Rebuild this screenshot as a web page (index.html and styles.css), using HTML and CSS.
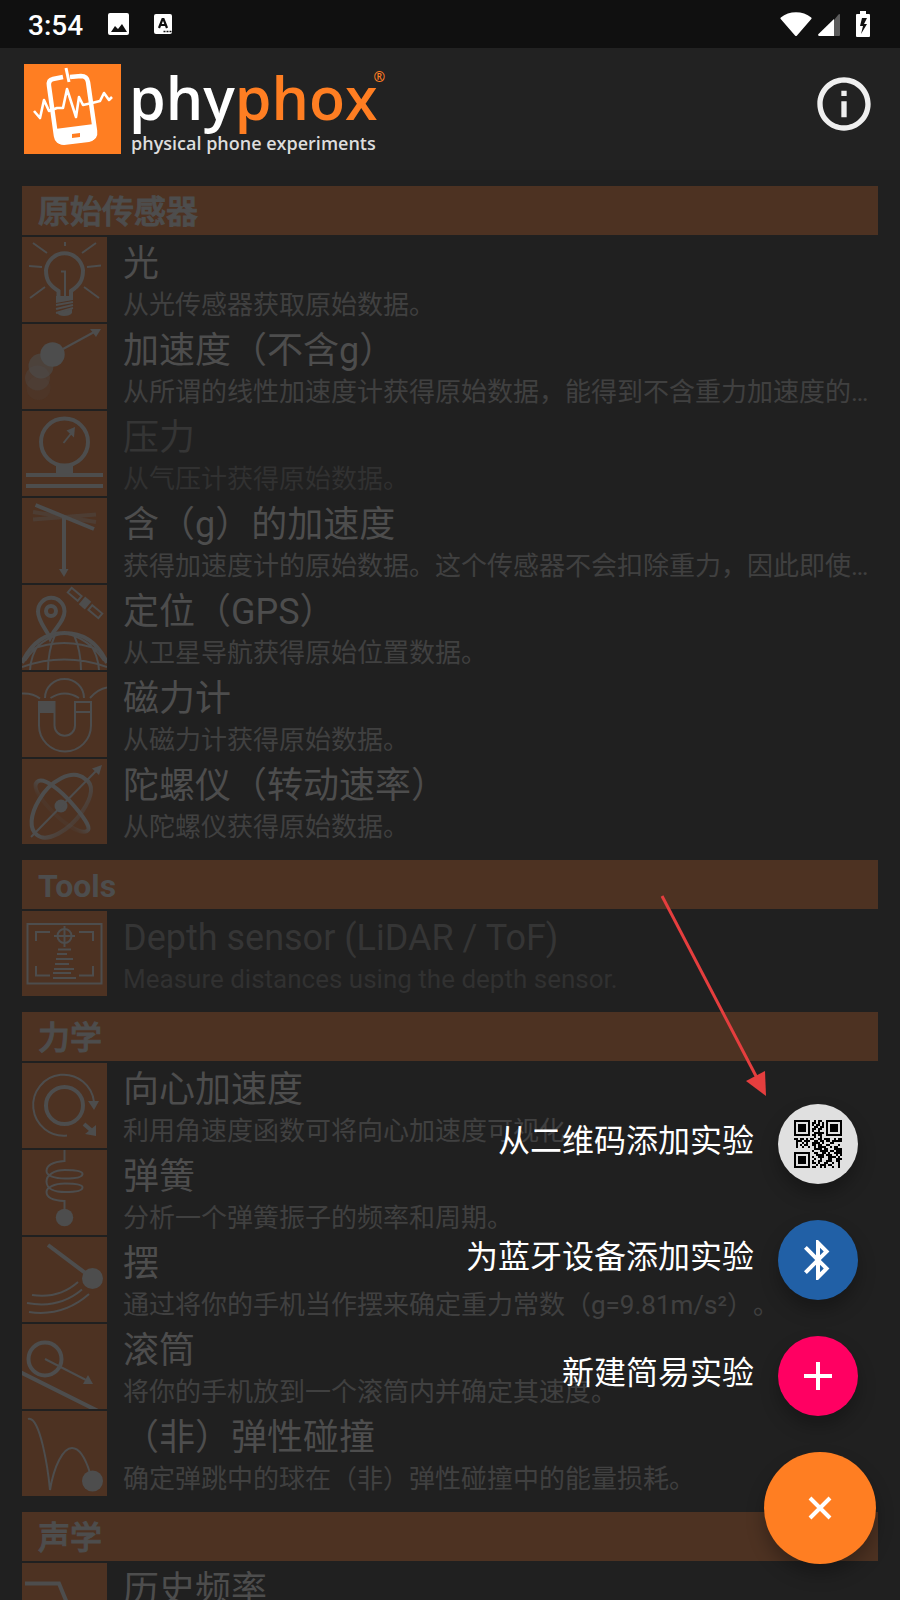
FILE: index.html
```html
<!DOCTYPE html>
<html lang="zh-CN">
<head>
<meta charset="utf-8">
<meta name="viewport" content="width=device-width, initial-scale=1">
<title>phyphox</title>
<link rel="stylesheet" href="styles.css">
</head>
<body>
<div class="app">
  <div class="status">
    <span class="clock">3:54</span>
    <svg class="status-picture" viewBox="0 0 24 24"><path fill="#fff" fill-rule="evenodd" d="M3 1h17a2 2 0 0 1 2 2v18a2 2 0 0 1-2 2H3a2 2 0 0 1-2-2V3a2 2 0 0 1 2-2zM4 20h16l-5-8-4 5-3-3z"/></svg>
    <svg class="status-lang" viewBox="0 0 20 22"><rect x="1" y="1" width="18" height="20" rx="2" fill="#fff"/><path d="M6 15l3.500-9h1L14 15M7.500 12h5" fill="none" stroke="#101010" stroke-width="2.200"/><path d="M10.500 18.500h2m1 0h2m1 0h2" stroke="#101010" stroke-width="1.600"/></svg>
    <span class="spacer"></span>
    <svg class="status-wifi" viewBox="0 0 32 26"><path fill="#fff" d="M.8 6.500C9-.6 23-.6 31.200 6.500q.8.700.1 1.500L17 24.500q-1 1-2 0L.7 8q-.7-.8.100-1.500z"/></svg>
    <svg class="status-signal" viewBox="0 0 22 22"><path fill="#5c5c5c" d="M16 6l4.500-5.500Q22-.5 22 1v20a1 1 0 0 1-1 1h-5z"/><path fill="#fff" d="M16 5v17H1q-1.500-.5-.5-2z"/></svg>
    <svg class="status-battery" viewBox="0 0 14 26"><path fill="#fff" fill-rule="evenodd" d="M4 0h6v3h3a1 1 0 0 1 1 1v21a1 1 0 0 1-1 1H1a1 1 0 0 1-1-1V4a1 1 0 0 1 1-1h3zM6 7L4 15h3l-2 8 6-10H8l3-6z"/></svg>
  </div>

  <header class="topbar">
    <div class="brand">
      <svg class="brand-mark" viewBox="0 0 97 90"><rect width="97" height="90" fill="#ff7e22"/><g fill="none" stroke="#fff" stroke-linejoin="round"><path stroke-width="4.500" d="M39 13l-10 2q-5 1-4 7l7 50q1 7 8 6l25-3q7-1 6-8l-7-49q-1-6-7-6l-11 1"/><path stroke-width="2.600" d="M10 47l6 7 4-18 5 11 8-3 6 0 4-19 9 28 3-20 4 8 9-2 8-2 4-8 5 7 3-3"/><path stroke-width="3" d="M42 4l3 14"/></g><path fill="#fff" fill-rule="evenodd" d="M31 65l39-5 2 9q0 8-7 9l-25 3q-7 0-8-7zM48 70v4l8-1v-4z"/></svg>
      <div class="brand-words">
        <div class="brand-name"><span>phy<b>phox</b></span><sup>®</sup></div>
        <div class="brand-tag">physical phone experiments</div>
      </div>
    </div>
    <button class="info" aria-label="Info"><svg viewBox="0 0 24 24"><path fill="#efefef" d="M11 7h2v2h-2zm0 4h2v6h-2zm1-9C6.480 2 2 6.480 2 12s4.480 10 10 10 10-4.480 10-10S17.520 2 12 2zm0 18c-4.410 0-8-3.590-8-8s3.590-8 8-8 8 3.590 8 8-3.590 8-8 8z"/></svg></button>
  </header>

  <main class="list">
    <section class="group">
      <h2>原始传感器</h2>
      <a class="row" href="#light"><svg class="tile" viewBox="0 0 85 85"><path class="w4" d="M36.500 60V54C27 48 24 43 24 33a18.700 19.500 0 0 1 37 0C61 43 58 48 49 54V60"/><path class="w2" d="M39 34.500h4V60M11 6l14 10M43 5v4M74 6L60 16M7 29l13 1M65 30l14-1.500M23 50L8 61M62 50l15 11"/><path class="w2" d="M34 68l17-3M34 72l17-4M34 76l17-5"/><path class="solid" d="M34 59h17v4l-17 3zM35 76l15-4v4q-2 3-8 3-5 0-7-3z"/></svg><span class="text"><span class="title">光</span><span class="desc">从光传感器获取原始数据。</span></span></a>
      <a class="row" href="#acceleration"><svg class="tile" viewBox="0 0 85 85"><circle class="solid" cx="16.500" cy="64" r="12" opacity=".13"/><circle class="solid" cx="15.500" cy="54" r="12.500" opacity=".35"/><circle class="solid" cx="19" cy="42" r="12.500" opacity=".6"/><circle class="solid" cx="30.500" cy="30.500" r="12.200"/><path class="w2" d="M41 25l33-18"/><path class="solid" d="M79 5H68l6 8z"/></svg><span class="text"><span class="title">加速度（不含g）</span><span class="desc">从所谓的线性加速度计获得原始数据，能得到不含重力加速度的加速度数据。</span></span></a>
      <a class="row off" href="#pressure"><svg class="tile" viewBox="0 0 85 85"><circle class="w4" cx="42.500" cy="31" r="23.500"/><path class="w2" d="M41.500 32l8-10"/><path class="solid" d="M53 16l-8.500 3.500 7.500 7zM34 53h17v9h30v4H4v-4h30zM4 73h77v4H4z"/></svg><span class="text"><span class="title">压力</span><span class="desc">从气压计获得原始数据。</span></span></a>
      <a class="row" href="#gravity"><svg class="tile" viewBox="0 0 85 85"><path class="w4" opacity=".4" d="M11 14l63 10M11 21.500l63-5"/><path class="w4" d="M13.500 7L72 31M42 20v52"/><path class="solid" d="M37 71h9.500L42 79z"/></svg><span class="text"><span class="title">含（g）的加速度</span><span class="desc">获得加速度计的原始数据。这个传感器不会扣除重力，因此即使手机静止也有读数。</span></span></a>
      <a class="row" href="#location"><svg class="tile" viewBox="0 0 85 85"><path class="w4" d="M28 53C24 44 16 36 16 26.500a13 13.500 0 0 1 26.500 0C42.500 36 33 43 28 53z"/><circle class="w4" cx="29" cy="26" r="5"/><path class="w4" d="M0 78C8 60 22 48 42.500 48S77 60 85 78"/><path class="w2" d="M8 65Q42 51 77 65M0 82Q42 67 85 82M33 50Q26 66 26 85M52 50Q59 66 59 85M17 59Q9 70 8 85M68 59Q76 70 77 85M42 48Q18 53 3 76M42 48Q67 53 82 76"/><g transform="rotate(40 63 18)"><path class="solid" d="M59 13h8v10h-8z"/><path class="w2" d="M43 15h13v6H43zM70 15h13v6H70z"/></g></svg><span class="text"><span class="title">定位（GPS）</span><span class="desc">从卫星导航获得原始位置数据。</span></span></a>
      <a class="row" href="#magnetometer"><svg class="tile" viewBox="0 0 85 85"><path class="w2" d="M17 30H32.500V53.500a10.200 10.200 0 0 0 20.500 0V30H69V53.500a26 26 0 0 1-52 0zM53 40h16M23 26a19.500 19 0 0 1 39 0M28.500 26q14-9 28.500 0M0 21.500q11-.5 18 5M68 26q8-9 17-10.500"/><path class="solid" d="M17 30h15.500v11H17z"/></svg><span class="text"><span class="title">磁力计</span><span class="desc">从磁力计获得原始数据。</span></span></a>
      <a class="row" href="#gyroscope"><svg class="tile" viewBox="0 0 85 85"><defs><linearGradient id="fadeA" gradientUnits="userSpaceOnUse" x1="25" y1="35" x2="62" y2="68"><stop offset=".4" stop-color="#4d4d4d"/><stop offset="1" stop-color="#4d4d4d" stop-opacity=".1"/></linearGradient><linearGradient id="fadeB" gradientUnits="userSpaceOnUse" x1="47" y1="38" x2="30" y2="56"><stop offset=".3" stop-color="#4d4d4d"/><stop offset=".8" stop-color="#4d4d4d" stop-opacity=".15"/></linearGradient></defs><g fill="none" stroke-width="4"><path stroke="url(#fadeA)" d="M63 20C50 9 28 22 17 41 8 56 7 70 15 76 25 84 47 72 60 53 71 37 72 25 63 20z"/><path stroke="url(#fadeB)" d="M15 23C21 17 39 31 53 48 65 62 69 70 65 72 58 76 41 64 28 50 15 36 11 27 15 23z"/></g><circle class="solid" cx="39" cy="47" r="6.500"/><path class="w2" d="M9 78l67-68"/><path class="solid" d="M80 6l-10 3.500 7 6.500z"/></svg><span class="text"><span class="title">陀螺仪（转动速率）</span><span class="desc">从陀螺仪获得原始数据。</span></span></a>
    </section>

    <section class="group">
      <h2 lang="en">Tools</h2>
      <a class="row off" href="#depth"><svg class="tile" viewBox="0 0 85 85"><path class="w2" d="M5.500 13h74v59.500h-74zM28 21H14v9M57 21h14v9M28 64.500H14V55M57 64.500h14V55M32 25h21M42.500 15v21"/><circle class="w2" cx="42.500" cy="25" r="7"/><path class="w2" d="M36 38.500h13M35 43h10M34 48h17M33 53h14M32 58h20M31 62h18M31 67h23"/></svg><span class="text"><span class="title">Depth sensor (LiDAR / ToF)</span><span class="desc">Measure distances using the depth sensor.</span></span></a>
    </section>

    <section class="group">
      <h2>力学</h2>
      <a class="row" href="#centripetal"><svg class="tile" viewBox="0 0 85 85"><circle class="w4" cx="42.500" cy="42.500" r="18.500"/><path class="w2" d="M45 72.500A30.500 30.500 0 1 1 72 39"/><path class="w4" d="M62 61l8 7"/><path class="solid" d="M66 38h11l-5 9zM74 62v11l-11-2z"/></svg><span class="text"><span class="title">向心加速度</span><span class="desc">利用角速度函数可将向心加速度可视化。</span></span></a>
      <a class="row" href="#spring"><svg class="tile" viewBox="0 0 85 85"><path class="w2" d="M42.500 0v11C30 12 24.500 16 24.500 21c0 5 8.500 7.500 18.500 7.500 11 0 17.500-1.500 17.500-4.500S53 20 43 20c-11 0-18.500 5-18.500 11.500C24.500 39 33 42 43 42c11 0 17.500-1.500 17.500-4.500S53 33.500 43 33.500c-11 0-18.500 4-18.500 8.500 0 5 5.500 8.500 18 9v9"/><circle class="solid" cx="42.500" cy="67.500" r="8.700"/></svg><span class="text"><span class="title">弹簧</span><span class="desc">分析一个弹簧振子的频率和周期。</span></span></a>
      <a class="row" href="#pendulum"><svg class="tile" viewBox="0 0 85 85"><path class="w4" d="M26 8l40 30"/><circle class="solid" cx="70.500" cy="41.500" r="10.500"/><path class="w2" d="M10 58q27 4 46-13M5 66q32 6 55-13.500M7 75q34 5 60-18"/></svg><span class="text"><span class="title">摆</span><span class="desc">通过将你的手机当作摆来确定重力常数（g=9.81m/s²）。</span></span></a>
      <a class="row" href="#roll"><svg class="tile" viewBox="0 0 85 85"><circle class="w4" cx="23" cy="35" r="16.500"/><path class="w2" d="M23 35l41 21"/><path class="w4" d="M-2 48l78 39"/><path class="solid" d="M71 60H61l5-9z"/></svg><span class="text"><span class="title">滚筒</span><span class="desc">将你的手机放到一个滚筒内并确定其速度。</span></span></a>
      <a class="row" href="#collision"><svg class="tile" viewBox="0 0 85 85"><path class="w2" d="M6 8c12-4 20 50 22 71 4-24 13-42 22-42 8 0 14 12 18 25"/><circle class="solid" cx="70.500" cy="70" r="10.500"/></svg><span class="text"><span class="title">（非）弹性碰撞</span><span class="desc">确定弹跳中的球在（非）弹性碰撞中的能量损耗。</span></span></a>
    </section>

    <section class="group">
      <h2>声学</h2>
      <a class="row" href="#frequency"><svg class="tile" viewBox="0 0 85 85"><path class="w4" d="M3 20.500h34q4 10 10 24h34"/></svg><span class="text"><span class="title">历史频率</span><span class="desc">音调随时间的变化。</span></span></a>
    </section>
  </main>

  <svg class="pointer" viewBox="0 0 110 206" aria-hidden="true"><path d="M4 6l95 182" stroke="#e53e3e" stroke-width="3"/><path d="M88 191l19-10 1 25z" fill="#e53e3e"/></svg>

  <div class="actions">
    <div class="action">
      <label for="add-qr">从二维码添加实验</label>
      <button id="add-qr" class="fab qr"><svg class="glyph" viewBox="0 0 24 24" shape-rendering="crispEdges"><path fill="none" stroke="#000" d="M.5.5h7v7h-7zM16.500.5h7v7h-7zM.5 16.500h7v7h-7z"/><path d="M2 2h4v4H2zM18 2h4v4h-4zM2 18h4v4H2z"/><path stroke="#000" d="M10 .5h1m1 0h2M9 1.500h2m1 0h1m1 0h1M9 2.500h1m1 0h2m1 0h1M10 3.500h2m1 0h2M9 4.500h2m1 0h2M9 5.500h1m2 0h1M10 6.500h5M9 7.500h2m1 0h2M10 8.500h1m2 0h1M0 9.500h2m1 0h2m1 0h1m1 0h2m2 0h2m1 0h3m2 0h1m1 0h2M1 10.500h3m1 0h3m2 0h2m1 0h2m1 0h2m1 0h5M1 11.500h1m2 0h1m1 0h1m2 0h4m1 0h1m3 0h2M1 12.500h1m1 0h1m1 0h2m2 0h2m1 0h2m2 0h2m4 0h1M1 13.500h1m2 0h1m2 0h1m2 0h1m1 0h4m2 0h1m1 0h2M10 14.500h4m1 0h2m3 0h4M9 15.500h1m3 0h4m1 0h2m1 0h3M10 16.500h2m2 0h2m1 0h1m2 0h4M11 17.500h4m1 0h3m2 0h1m1 0h1M9 18.500h1m2 0h3m2 0h4m1 0h1M10 19.500h1m2 0h1m3 0h2m2 0h3M9 20.500h1m2 0h2m2 0h3m2 0h2M9 21.500h2m1 0h1m2 0h2m2 0h1m2 0h1M11 22.500h1m1 0h3m1 0h2m3 0h1M9 23.500h2m2 0h1m1 0h1m3 0h1m2 0h1"/></svg></button>
    </div>
    <div class="action">
      <label for="add-bluetooth">为蓝牙设备添加实验</label>
      <button id="add-bluetooth" class="fab bluetooth"><svg class="glyph" viewBox="0 0 24 24"><path fill="#fff" d="M17.710 7.710L12 2h-1v7.590L6.410 5 5 6.410 10.590 12 5 17.590 6.410 19 11 14.410V22h1l5.710-5.710-4.300-4.290 4.300-4.290zM13 5.830l1.880 1.880L13 9.590V5.830zm1.880 10.460L13 18.170v-3.760l1.880 1.880z"/></svg></button>
    </div>
    <div class="action">
      <label for="add-simple">新建简易实验</label>
      <button id="add-simple" class="fab create"><svg class="glyph" viewBox="0 0 24 24"><path fill="#fff" d="M19 13h-6v6h-2v-6H5v-2h6V5h2v6h6v2z"/></svg></button>
    </div>
    <button class="fab close" aria-label="关闭"><svg viewBox="0 0 24 24"><path d="M2 2l20 20M22 2L2 22" stroke="#fff" stroke-width="4"/></svg></button>
  </div>
</div>
</body>
</html>
```
FILE: styles.css
```css
* { box-sizing: border-box; }

body {
  margin: 0;
  background: #202020;
  font-family: Roboto, "Noto Sans CJK SC", sans-serif;
  text-spacing-trim: space-all;
}

button {
  margin: 0;
  padding: 0;
  border: 0;
  background: none;
  cursor: pointer;
}

svg { display: block; }

.app {
  position: relative;
  display: flex;
  flex-direction: column;
  height: 100vh;
  overflow: hidden;
}

/* status bar */
.status {
  flex: none;
  display: flex;
  align-items: center;
  height: 48px;
  padding: 0 30px 0 28px;
  background: #101010;
  color: #fff;
}

.clock { font-size: 28px; font-weight: 500; line-height: 44px; padding-top: 4px; }
.spacer { flex: 1; }
.status-picture { width: 24px; height: 24px; margin-left: 24px; }
.status-lang { width: 20px; height: 22px; margin-left: 22px; }
.status-wifi { width: 32px; height: 26px; }
.status-signal { width: 22px; height: 22px; margin-left: 6px; margin-top: 2px; }
.status-battery { width: 14px; height: 26px; margin-left: 16px; }

/* title bar */
.topbar {
  flex: none;
  display: flex;
  align-items: flex-start;
  justify-content: space-between;
  height: 122px;
  padding: 16px 24px 0;
  background: #222;
}

.brand { display: flex; gap: 8px; }
.brand-mark { width: 97px; height: 90px; }
.brand-words { font-family: "Open Sans", "Noto Sans", sans-serif; color: #fff; }

.brand-name {
  display: flex;
  font-size: 59px;
  font-weight: 600;
  line-height: 66px;
}
.brand-name b { font-weight: inherit; color: #ff7e22; }
.brand-name sup { font-size: 14px; line-height: 26px; color: #ff7e22; margin-left: -4px; }
.brand-tag { font-size: 18px; font-weight: 600; line-height: 26px; color: #ddd; padding-left: 2px; }

.info { padding-top: 8px; }
.info svg { width: 64px; height: 64px; }

/* experiment list */
.list {
  flex: 1;
  min-height: 0;
  display: flex;
  flex-direction: column;
  gap: 16px;
  padding: 16px 22px;
  overflow-y: auto;
  scrollbar-width: none;
}

.group {
  flex: none;
  display: flex;
  flex-direction: column;
  gap: 2px;
}

h2 {
  margin: 0;
  padding: 3px 0 0 16px;
  background: #4d3222;
  color: #4d4d4d;
  font-size: 32px;
  font-weight: 500;
  line-height: 46px;
  -webkit-text-stroke: 1px #4d4d4d;
}
h2:lang(en) { font-weight: 700; -webkit-text-stroke: 0; }

.row {
  display: flex;
  gap: 16px;
  padding-right: 8px;
  color: #4d4d4d;
  text-decoration: none;
}

.tile { flex: none; width: 85px; height: 85px; background: #4d3222; }
.solid { fill: #4d4d4d; }
.w2, .w4 { fill: none; stroke: #4d4d4d; }
.w2 { stroke-width: 2; }
.w4 { stroke-width: 4; }

.text {
  flex: 1;
  min-width: 0;
  display: flex;
  flex-direction: column;
  gap: 5px;
  padding-top: 6px;
}
.title { font-size: 36px; line-height: 42px; }
.desc {
  color: #404040;
  font-size: 26px;
  line-height: 30px;
  white-space: nowrap;
  overflow: hidden;
  text-overflow: ellipsis;
}
.off .title { color: #353535; }
.off .desc { color: #313131; }

/* floating menu */
.pointer {
  position: absolute;
  right: 132px;
  bottom: 504px;
  width: 110px;
  height: 206px;
}

.actions {
  position: absolute;
  right: 24px;
  bottom: 36px;
  display: flex;
  flex-direction: column;
  align-items: flex-end;
  gap: 36px;
}

.action {
  display: flex;
  align-items: center;
  gap: 24px;
  margin-right: 18px;
}
.action label { color: #fff; font-size: 32px; line-height: 38px; padding-bottom: 6px; }

.fab {
  display: grid;
  place-items: center;
  width: 80px;
  height: 80px;
  border-radius: 50%;
  box-shadow: 0 10px 18px rgba(0, 0, 0, 0.28);
}
.qr { background: #e0e0e0; }
.bluetooth { background: #2160a6; }
.create { background: #ff0062; }
.close { width: 112px; height: 112px; background: #ff7e22; }
.close svg { width: 24px; height: 24px; }
.glyph { width: 48px; height: 48px; }
```
